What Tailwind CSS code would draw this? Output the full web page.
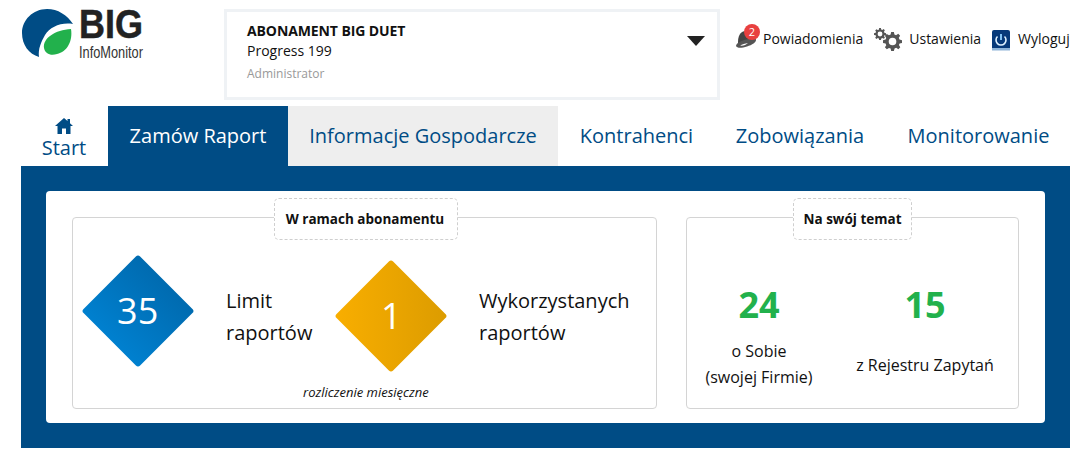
<!DOCTYPE html>
<html lang="pl">
  <head>
    <meta charset="UTF-8" />
    <title>BIG InfoMonitor</title>
    <script src="https://cdn.jsdelivr.net/npm/@tailwindcss/browser@4"></script>
  </head>
  <body class="bg-white text-[#111] font-['Open_Sans',sans-serif] overflow-hidden">
    <div class="w-[1082px] h-[456px] pl-[21px] pr-[10px]">

      <!-- Header -->
      <header class="h-[106px] flex items-start">
        <a href="#" class="block w-[203px] pt-[8px] shrink-0">
          <svg class="overflow-visible" width="125" height="52" viewBox="0 0 125 52">
            <path d="M26 1 C37 1 46 7 52 16 C40 14 29 19 24 27 C20 34 17 41 18 49 C8 46 1 37 1 25 C1 12 12 1 26 1 Z" fill="#004c85"/>
            <path d="M50 21 C52 33 46 44 36 46 C30 48 24 46 23 40 C22 30 34 22 50 21 Z" fill="#22b14c"/>
            <text x="58" y="30" font-family="Liberation Sans, sans-serif" font-weight="700" font-size="40" textLength="64" lengthAdjust="spacingAndGlyphs" fill="#222" stroke="#222" stroke-width="0.5">BIG</text>
            <text x="58" y="50" font-family="Liberation Sans, sans-serif" font-size="16" textLength="64" lengthAdjust="spacingAndGlyphs" fill="#333">InfoMonitor</text>
          </svg>
        </a>

        <div class="mt-[9px] w-[496px] h-[91px] border-[3px] border-[#eff2f5] pl-[20px] pr-[12px] pt-[9px] flex justify-between shrink-0">
          <div>
            <div class="text-[14px] leading-[20px] font-bold tracking-[-0.1px]">ABONAMENT BIG DUET</div>
            <div class="text-[14px] leading-[20px]">Progress 199</div>
            <div class="text-[12px] leading-[20px] mt-[3px] text-[#999]">Administrator</div>
          </div>
          <div class="mt-[15px] w-0 h-0 border-x-[9px] border-x-transparent border-t-[10px] border-t-[#222]"></div>
        </div>

        <nav class="flex items-center mt-[26px] ml-[15px] text-[14px] leading-[26px]">
          <a href="#" class="flex items-center">
            <span class="relative block w-[28px] h-[26px]">
              <svg class="absolute left-0 top-[4px]" width="22" height="19" viewBox="0 0 22 19">
                <path d="M3 12 C3 8 4 4 7 2 C10 0 14 1 16 3 L18 9 C13 12 8 14 3 15 Z" fill="#444"/>
                <path d="M1 16 C1 13 6 11 11 9.500 C15 8.500 20 7.500 21 9.500 C21.500 12 17 15 12 16.500 C7 18 2 18.500 1 16 Z" fill="#555"/>
                <path d="M5 15.500 C7 14.500 10 13.500 13 13 C11 15 8 16 5 15.500 Z" fill="#fff"/>
              </svg>
              <span class="absolute left-[9px] top-[-2px] w-[16px] h-[16px] rounded-full bg-[#e8403f] text-white text-[11px] leading-[16px] text-center">2</span>
            </span>
            <span>Powiadomienia</span>
          </a>
          <a href="#" class="flex items-center ml-[11px]">
            <svg class="mr-[7px]" width="28" height="26" viewBox="0 0 28 26">
              <g fill="#555" fill-rule="evenodd">
                <path transform="translate(0 2) scale(0.860)" d="M6 0h2l.4 1.800 1.200.5 1.600-1 1.400 1.400-1 1.600.5 1.200L14 6v2l-1.800.4-.5 1.200 1 1.600-1.400 1.400-1.600-1-1.200.5L8 14H6l-.4-1.800-1.200-.5-1.600 1-1.400-1.400 1-1.600-.5-1.200L0 8V6l1.900-.4.500-1.200-1-1.600 1.400-1.400 1.600 1 1.200-.5Z M7 4.200a2.800 2.800 0 1 0 0 5.600a2.800 2.800 0 0 0 0-5.600Z"/>
                <path transform="translate(9 6) scale(1.360)" d="M6 0h2l.4 1.800 1.200.5 1.600-1 1.400 1.400-1 1.600.5 1.200L14 6v2l-1.800.4-.5 1.200 1 1.600-1.400 1.400-1.600-1-1.200.5L8 14H6l-.4-1.800-1.200-.5-1.600 1-1.400-1.400 1-1.600-.5-1.200L0 8V6l1.900-.4.500-1.200-1-1.600 1.400-1.400 1.600 1 1.200-.5Z M7 4.200a2.800 2.800 0 1 0 0 5.600a2.800 2.800 0 0 0 0-5.600Z"/>
              </g>
            </svg>
            <span>Ustawienia</span>
          </a>
          <a href="#" class="flex items-center ml-[11px]">
            <svg class="mr-[8px] mt-[2px]" width="18" height="21" viewBox="0 0 18 21">
              <rect x="0" y="0" width="18" height="20" rx="2" fill="#06397a"/>
              <rect x="0" y="18" width="18" height="2.500" fill="#8fb4d8"/>
              <path d="M5.500 6.500a5 5 0 1 0 7 0" fill="none" stroke="#dff1ff" stroke-width="1.600"/>
              <path d="M9 4v6" stroke="#8fd0ff" stroke-width="1.800"/>
            </svg>
            <span>Wyloguj</span>
          </a>
        </nav>
      </header>

      <!-- Tabs -->
      <nav class="h-[60px] flex text-[#004c85] text-[20px]">
        <a href="#" class="w-[87px] flex flex-col items-center pt-[12px] pr-[1px]">
          <svg width="18" height="16" viewBox="0 0 18 16"><path d="M9 0 L12.500 3 L12.500 1 L15 1 L15 5.200 L18 8 L15.500 8 L15.500 16 L11 16 L11 10.500 L7 10.500 L7 16 L2.500 16 L2.500 8 L0 8 Z" fill="#004c85"/></svg>
          <span class="leading-[24px] mt-[2px]">Start</span>
        </a>
        <a href="#" class="w-[180px] bg-[#004c85] text-white flex items-center justify-center">Zamów Raport</a>
        <a href="#" class="w-[270px] bg-[#eeeeee] flex items-center justify-center">Informacje Gospodarcze</a>
        <a href="#" class="w-[157px] flex items-center justify-center">Kontrahenci</a>
        <a href="#" class="w-[170px] flex items-center justify-center">Zobowiązania</a>
        <a href="#" class="w-[187px] flex items-center justify-center">Monitorowanie</a>
      </nav>

      <!-- Panel -->
      <main class="w-[1049px] h-[282px] bg-[#004c85] p-[25px]">
        <div class="h-[232px] bg-white rounded-[4px] pt-[26px] pl-[26px] flex gap-[29px]">

          <section class="relative w-[585px] h-[192px] border border-[#d4d4d4] rounded-[4px] flex">
            <h2 class="absolute left-[201px] top-[-20px] w-[184px] h-[42px] pr-[2px] bg-white border border-dashed border-[#cfcfcf] rounded-[5px] text-[13.500px] font-bold text-center leading-[40px]">W ramach abonamentu</h2>

            <div class="w-[113px] h-[113px] ml-[8px] mt-[36px] flex items-center justify-center">
              <div class="w-[80px] h-[80px] rotate-45 rounded-[3px] bg-linear-to-t from-[#0080cf] to-[#006bb0] shrink-0 flex items-center justify-center">
                <span class="-rotate-45 text-white text-[36px] leading-none">35</span>
              </div>
            </div>
            <div class="ml-[32px] mt-[67px] text-[20px] leading-[32px] w-[108px]">Limit<br>raportów</div>
            <div class="w-[113px] h-[113px] mt-[41px] flex items-center justify-center">
              <div class="w-[80px] h-[80px] rotate-45 rounded-[3px] bg-linear-to-tr from-[#f9ae00] to-[#dc9c00] shrink-0 flex items-center justify-center">
                <span class="-rotate-45 text-white text-[36px] leading-none">1</span>
              </div>
            </div>
            <div class="ml-[32px] mt-[67px] text-[20px] leading-[32px]">Wykorzystanych<br>raportów</div>
            <p class="absolute left-[230px] top-[164px] text-[13px] leading-[20px] italic">rozliczenie miesięczne</p>
          </section>

          <section class="relative w-[333px] h-[192px] border border-[#d4d4d4] rounded-[4px] flex pt-[67px] pl-[12px]">
            <h2 class="absolute left-[106px] top-[-20px] w-[119px] h-[42px] bg-white border border-dashed border-[#cfcfcf] rounded-[5px] text-[13.500px] font-bold text-center leading-[40px]">Na swój temat</h2>

            <div class="w-[120px] text-center">
              <div class="text-[#22b14c] text-[36px] font-bold leading-[40px]">24</div>
              <div class="mt-[13px] text-[16px] leading-[26px]">o Sobie<br>(swojej Firmie)</div>
            </div>
            <div class="w-[166px] ml-[23px] text-center">
              <div class="text-[#22b14c] text-[36px] font-bold leading-[40px]">15</div>
              <div class="mt-[27px] text-[16px] leading-[26px]">z Rejestru Zapytań</div>
            </div>
          </section>
        </div>
      </main>
    </div>
  </body>
</html>
